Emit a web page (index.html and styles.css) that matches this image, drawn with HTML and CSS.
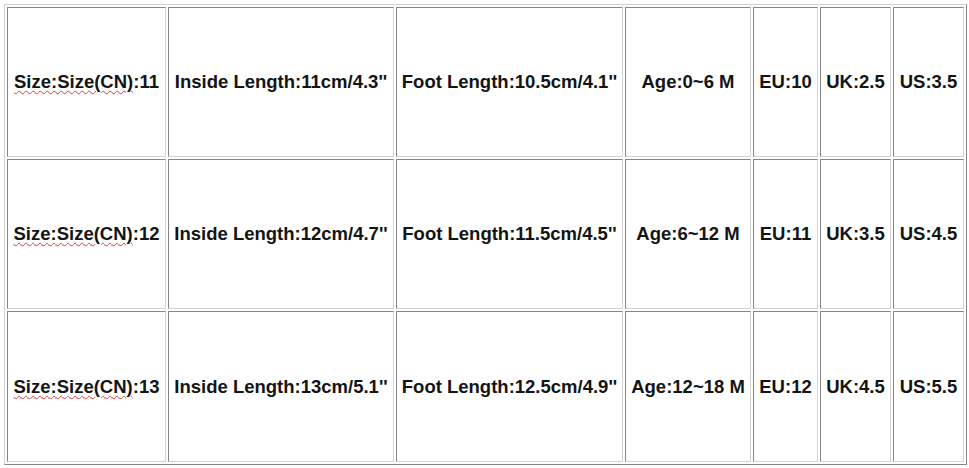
FILE: index.html
```html
<!DOCTYPE html>
<html>
<head>
<meta charset="utf-8">
<link rel="stylesheet" href="styles.css">
</head>
<body>
<div class="wrap">
<table class="size-table">
  <colgroup>
    <col class="c1"><col class="c2"><col class="c3"><col class="c4"><col class="c5"><col class="c6"><col class="c7">
  </colgroup>
  <tr class="r1">
    <td><span class="spell">Size:Size(CN)</span>:11</td>
    <td>Inside Length:11cm/4.3''</td>
    <td>Foot Length:10.5cm/4.1''</td>
    <td>Age:0~6 M</td>
    <td>EU:10</td>
    <td>UK:2.5</td>
    <td>US:3.5</td>
  </tr>
  <tr class="r2">
    <td><span class="spell">Size:Size(CN)</span>:12</td>
    <td>Inside Length:12cm/4.7''</td>
    <td>Foot Length:11.5cm/4.5''</td>
    <td>Age:6~12 M</td>
    <td>EU:11</td>
    <td>UK:3.5</td>
    <td>US:4.5</td>
  </tr>
  <tr class="r3">
    <td><span class="spell">Size:Size(CN)</span>:13</td>
    <td>Inside Length:13cm/5.1''</td>
    <td>Foot Length:12.5cm/4.9''</td>
    <td>Age:12~18 M</td>
    <td>EU:12</td>
    <td>UK:4.5</td>
    <td>US:5.5</td>
  </tr>
</table>
</div>
</body>
</html>
```

FILE: styles.css
```css
html, body {
  margin: 0;
  padding: 0;
  background: #ffffff;
}
.wrap {
  padding: 4px 0 0 4px;
}
.size-table {
  table-layout: fixed;
  width: 963px;
  border-collapse: separate;
  border-spacing: 2px;
  border-style: solid;
  border-width: 1px;
  border-color: #d2d2d2 #858585 #858585 #d2d2d2;
  font-family: "Liberation Sans", Arial, sans-serif;
  font-weight: bold;
  font-size: 18.5px;
  color: #141414;
}
.c1 { width: 159px; }
.c2 { width: 226px; }
.c3 { width: 227px; }
.c4 { width: 126px; }
.c5 { width: 65px; }
.c6 { width: 71px; }
.c7 { width: 71px; }
.size-table td {
  box-sizing: border-box;
  border-style: solid;
  border-width: 1px;
  border-color: #858585 #d2d2d2 #d2d2d2 #858585;
  padding: 0;
  text-align: center;
  vertical-align: middle;
  white-space: nowrap;
}
.r1 td, .r2 td { height: 150px; }
.r3 td { height: 151px; }
.spell {
  text-decoration: underline wavy #d04040;
  text-decoration-thickness: 1px;
  text-underline-offset: 2px;
}
```
